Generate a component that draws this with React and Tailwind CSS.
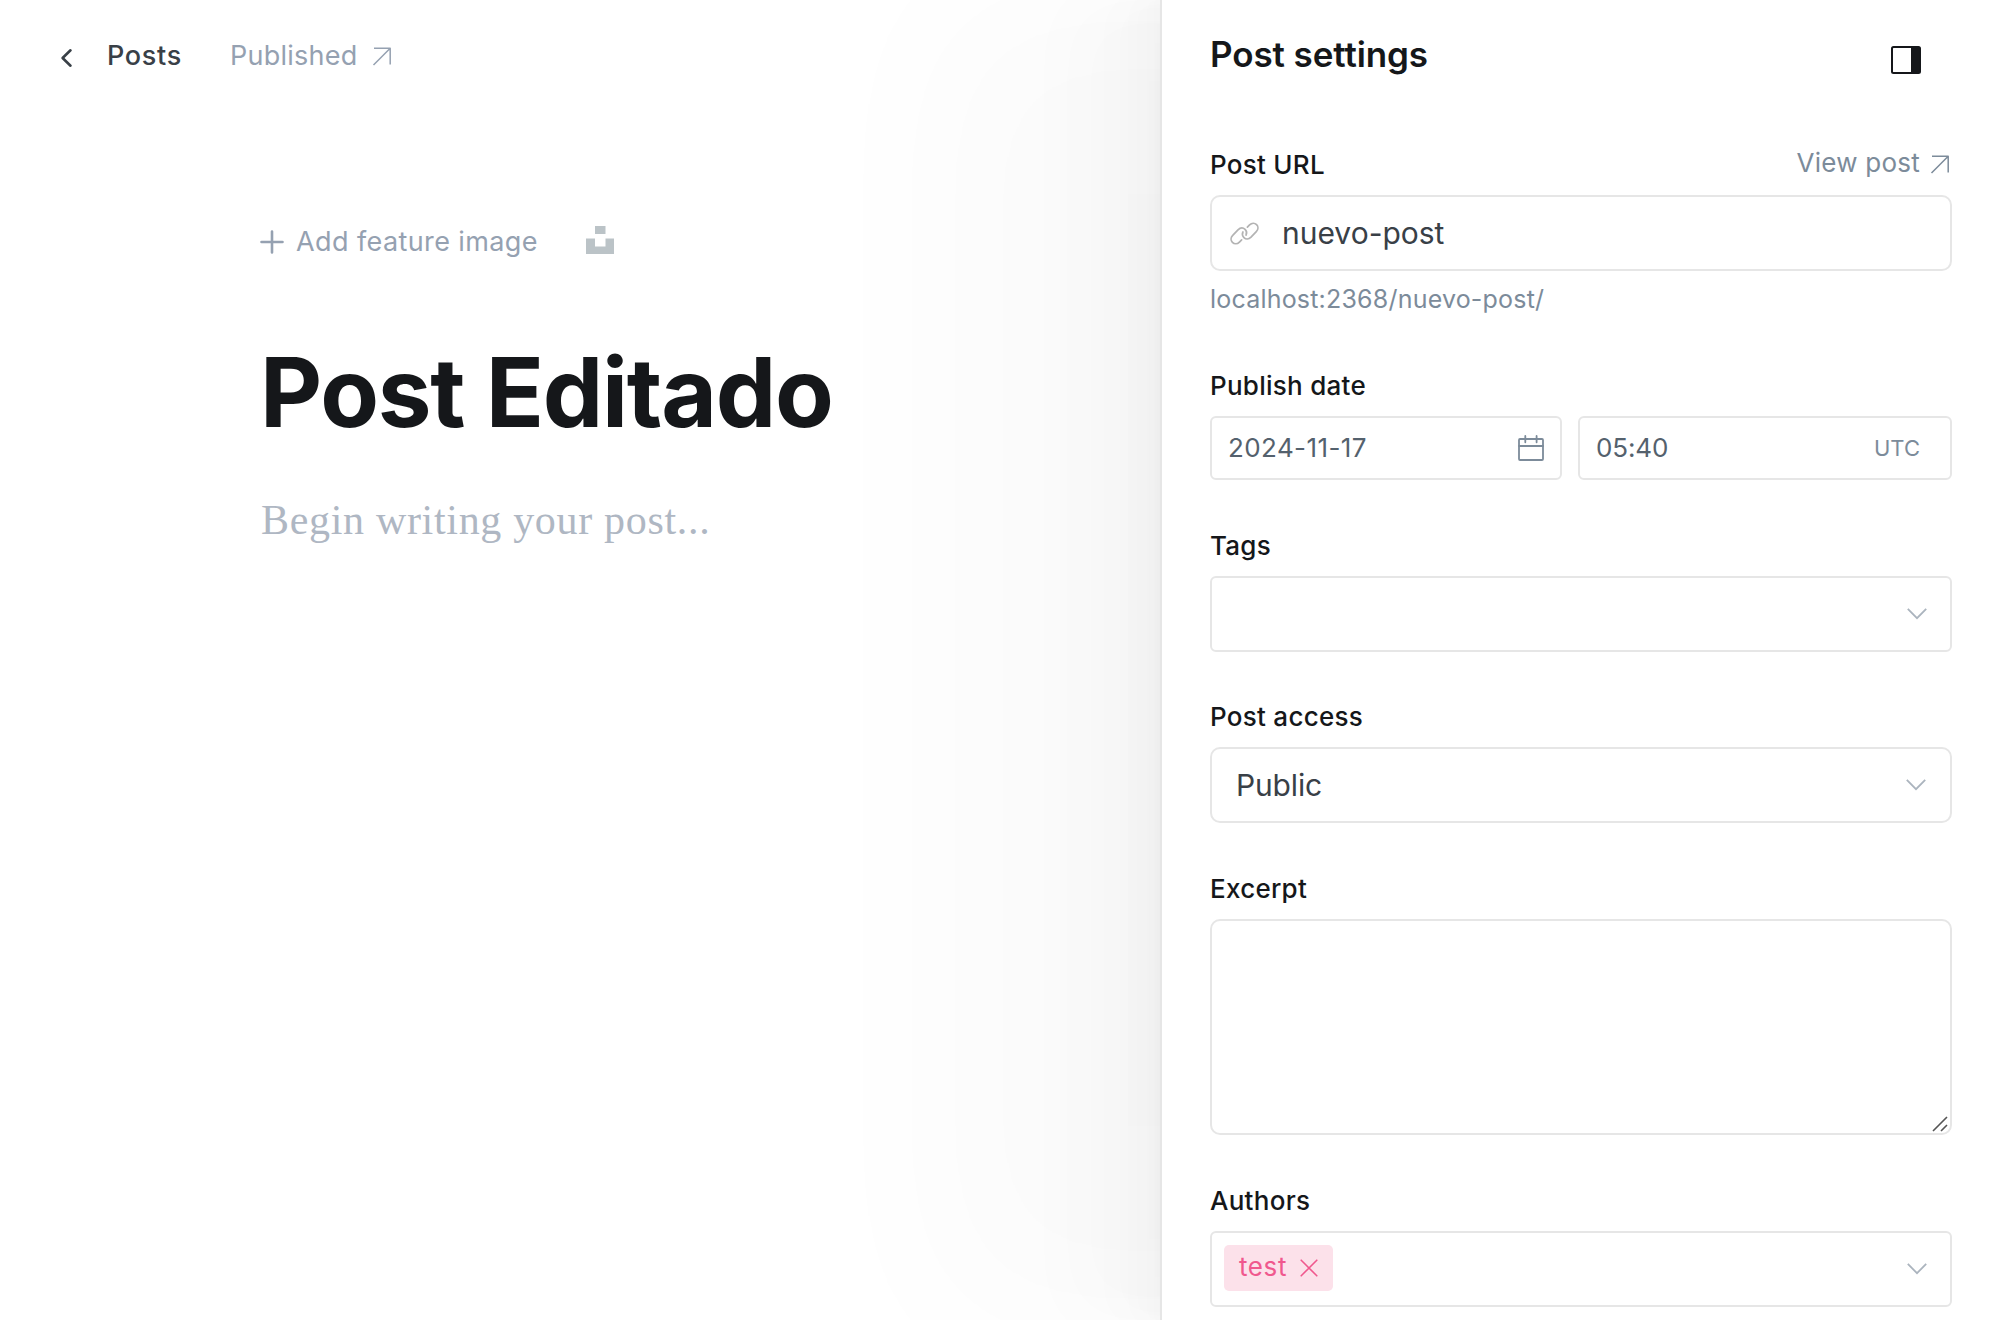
const ICON = {
  fill: "none",
  stroke: "currentColor",
};

function ArrowUpRight({ className }) {
  return (
    <svg className={className} width="20" height="20" viewBox="0 0 20 20" {...ICON} strokeWidth="1.5">
      <path d="M2 2.3H18.2V18.5M18.2 2.3L1.5 19" strokeLinejoin="round" />
    </svg>
  );
}

function Chevron({ className }) {
  return (
    <svg className={className} width="20" height="12" viewBox="0 0 20 12" {...ICON} strokeWidth="1.8">
      <path d="M0.8 0.8L10 10.2L19.2 0.8" />
    </svg>
  );
}

function Label({ children }) {
  return (
    <span className="block text-[26px] leading-[36px] font-medium tracking-[0.27px] text-[#15171a]">
      {children}
    </span>
  );
}

export default function App() {
  return (
    <div className="flex h-[1320px] w-[2000px] overflow-hidden bg-white font-['Inter',sans-serif]">
      <main className="w-[1160px] shrink-0">
        <header className="flex h-[112px] items-center pl-[60px]">
          <svg width="14" height="20" viewBox="0 0 14 20" {...ICON} strokeWidth="2.6" strokeLinecap="round" strokeLinejoin="round" className="mt-[3px] text-[#394047]">
            <path d="M10.5 2.3L2.6 10L10.5 17.7" />
          </svg>
          <span className="ml-[33px] w-[75px] text-[27px] leading-[40px] font-medium tracking-[0.7px] text-[#394047]">Posts</span>
          <span className="ml-[48px] w-[129px] text-[27px] leading-[40px] tracking-[0.25px] text-[#95a1b1]">Published</span>
          <ArrowUpRight className="ml-[13px] text-[#95a1b1]" />
        </header>

        <div className="pl-[260px]">
          <div className="mt-[110px] flex h-[40px] items-center text-[#95a1b1]">
            <svg width="24" height="24" viewBox="0 0 24 24" {...ICON} strokeWidth="2.6" strokeLinecap="round">
              <path d="M12 1.5V22.5M1.5 12H22.5" />
            </svg>
            <span className="ml-[12px] w-[242px] text-[27px] leading-[40px] tracking-[0.4px] whitespace-nowrap">Add feature image</span>
            <svg width="28" height="28" viewBox="0 0 28 28" className="mb-[4px] ml-[48px]" fill="#bbc3c7">
              <path d="M9 0H19.5V8H9ZM0 12.5H9V20.5H19.5V12.5H28V28H0Z" />
            </svg>
          </div>
          <h1 className="mt-[70px] text-[96px] leading-[120px] font-bold tracking-[-1.25px] text-[#15171a]">Post Editado</h1>
          <p className="mt-[36px] pl-px font-['Georgia','Liberation_Serif',serif] text-[42px] leading-[64px] tracking-[0.68px] text-[#afb7c3]">Begin writing your post...</p>
        </div>
      </main>

      <aside className="w-[840px] shrink-0 border-l-2 border-[#e6e6e6] bg-white pr-[48px] pl-[48px] shadow-[-5.6px_0_4.4px_rgba(0,0,0,0.006),-13.4px_0_10.6px_rgba(0,0,0,0.008),-27px_0_20px_rgba(0,0,0,0.01),-48px_0_35.8px_rgba(0,0,0,0.012),-92px_0_66.8px_rgba(0,0,0,0.014),-226px_0_160px_rgba(0,0,0,0.02)]">
        <div className="flex h-[110px] justify-between">
          <h2 className="mt-[32px] text-[35px] leading-[44px] font-semibold tracking-[-0.1px] text-[#15171a]">Post settings</h2>
          <svg width="30" height="28" viewBox="0 0 30 28" className="mt-[46px] mr-[31px]">
            <rect x="1" y="1" width="28" height="26" rx="1.5" fill="none" stroke="#15171a" strokeWidth="2" />
            <path d="M20 1H28.5L29 27H20Z" fill="#15171a" />
          </svg>
        </div>

        <div className="mt-[37px] flex h-[48px] justify-between">
          <Label>Post URL</Label>
          <div className="-mt-px mr-[2px] flex items-start text-[#7c8b9a]">
            <span className="text-[26px] leading-[34px] tracking-[0.25px]">View post</span>
            <ArrowUpRight className="mt-[8px] ml-[10px]" />
          </div>
        </div>
        <div className="flex h-[76px] items-center rounded-[10px] border-2 border-[#e6e6e6] pl-[18px]">
          <svg width="29" height="23" viewBox="0 0 30 24" {...ICON} strokeWidth="1.8" strokeLinecap="round" className="text-[#b3b3b3]">
            <path d="M12 18.6L9.7 20.9C7.4 23.2 4.2 23 2.4 21.2C0.6 19.4 0.4 16.3 2.7 14L8.2 8.2C10.6 5.8 13.6 5.8 15.6 7.8C17.2 9.4 17.5 11.8 16.6 13.6" />
            <path d="M18 5.4L20.3 3.1C22.6 0.8 25.8 1 27.6 2.8C29.4 4.6 29.6 7.7 27.3 10L21.8 15.8C19.4 18.2 16.4 18.2 14.4 16.2C12.8 14.6 12.5 12.2 13.4 10.4" />
          </svg>
          <span className="ml-[23px] text-[30px] leading-[44px] text-[#394047]">nuevo-post</span>
        </div>
        <p className="mt-[10px] text-[25px] leading-[36px] tracking-[0.2px] text-[#7c8b9a]">localhost:2368/nuevo-post/</p>

        <div className="mt-[51px] mb-[12px]"><Label>Publish date</Label></div>
        <div className="flex gap-[16px]">
          <div className="flex h-[64px] w-[352px] items-center justify-between rounded-[6px] border-2 border-[#e6e6e6] px-[16px]">
            <span className="text-[26px] leading-[36px] tracking-[0.4px] text-[#54616d]">2024-11-17</span>
            <svg width="26" height="26" viewBox="0 0 26 26" {...ICON} strokeWidth="1.8" strokeLinecap="round" className="text-[#7c8b9a]">
              <rect x="1" y="4" width="24" height="21" rx="1" />
              <path d="M1 11H25M7.3 0.9V7.3M18.6 0.9V7.3" />
            </svg>
          </div>
          <div className="flex h-[64px] flex-1 items-center justify-between rounded-[6px] border-2 border-[#e6e6e6] pr-[30px] pl-[16px]">
            <span className="text-[26px] leading-[36px] tracking-[-0.15px] text-[#54616d]">05:40</span>
            <span className="text-[22px] leading-[32px] text-[#7c8b9a]">UTC</span>
          </div>
        </div>

        <div className="mt-[48px] mb-[12px]"><Label>Tags</Label></div>
        <div className="flex h-[76px] items-center justify-end rounded-[6px] border-2 border-[#e6e6e6] pr-[23px]">
          <Chevron className="text-[#abb4be]" />
        </div>

        <div className="mt-[47px] mb-[12px]"><Label>Post access</Label></div>
        <div className="flex h-[76px] items-center justify-between rounded-[10px] border-2 border-[#e6e6e6] pr-[24px] pl-[24px]">
          <span className="text-[30px] leading-[44px] tracking-[-0.15px] text-[#394047]">Public</span>
          <Chevron className="text-[#abb4be]" />
        </div>

        <div className="mt-[48px] mb-[12px]"><Label>Excerpt</Label></div>
        <div className="flex h-[216px] items-end justify-end rounded-[10px] border-2 border-[#e6e6e6] pr-[2px] pb-[1px]">
          <svg width="16" height="16" viewBox="0 0 16 16" {...ICON} strokeWidth="1.6" className="text-[#555]">
            <path d="M1 15L15 1M9 15L15 9" />
          </svg>
        </div>

        <div className="mt-[48px] mb-[12px]"><Label>Authors</Label></div>
        <div className="flex h-[76px] items-center justify-between rounded-[6px] border-2 border-[#e6e6e6] pr-[23px] pl-[12px]">
          <div className="mb-[2px] flex h-[46px] w-[109px] items-center rounded-[5px] bg-[#fce1ea] pl-[15px] text-[#f0588e]">
            <span className="mb-[2px] text-[26px] leading-[36px] tracking-[0.6px]">test</span>
            <svg width="18" height="18" viewBox="0 0 18 18" {...ICON} strokeWidth="1.6" strokeLinecap="round" className="ml-[13px]">
              <path d="M1.2 1.2L16.8 16.8M16.8 1.2L1.2 16.8" />
            </svg>
          </div>
          <Chevron className="text-[#abb4be]" />
        </div>
      </aside>
    </div>
  );
}
